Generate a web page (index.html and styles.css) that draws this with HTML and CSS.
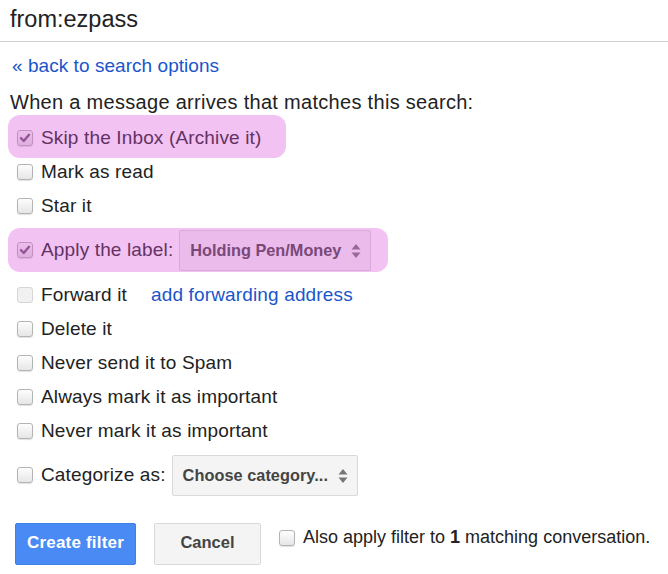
FILE: index.html
```html
<!DOCTYPE html>
<html>
<head>
<meta charset="utf-8">
<link rel="stylesheet" href="styles.css">
</head>
<body>
<div class="header">from:ezpass</div>
<div class="content">
  <div class="back"><a href="#">« back to search options</a></div>
  <div class="intro">When a message arrives that matches this search:</div>

  <div class="row">
    <span class="hl hl-skip"></span>
    <span class="cb checked"><svg viewBox="0 0 16 16" width="16" height="16"><path d="M4 8.2 L6.8 11 L12 4.8" fill="none" stroke="#6a5a72" stroke-width="2.4" stroke-linecap="round" stroke-linejoin="round"/></svg></span>
    <span class="label">Skip the Inbox (Archive it)</span>
  </div>
  <div class="row">
    <span class="cb"></span>
    <span class="label">Mark as read</span>
  </div>
  <div class="row">
    <span class="cb"></span>
    <span class="label">Star it</span>
  </div>
  <div class="row row-select row-apply">
    <span class="hl hl-apply"></span>
    <span class="cb checked"><svg viewBox="0 0 16 16" width="16" height="16"><path d="M4 8.2 L6.8 11 L12 4.8" fill="none" stroke="#6a5a72" stroke-width="2.4" stroke-linecap="round" stroke-linejoin="round"/></svg></span>
    <span class="label">Apply the label:</span>
    <span class="select sel-label">Holding Pen/Money<svg class="arrows" viewBox="0 0 10 16" width="10" height="16"><path d="M5 1 L9.5 6.5 L0.5 6.5 Z M5 15 L9.5 9.5 L0.5 9.5 Z" fill="#777"/></svg></span>
  </div>
  <div class="row">
    <span class="cb disabled"></span>
    <span class="label">Forward it</span>
    <a class="fwd" href="#">add forwarding address</a>
  </div>
  <div class="row">
    <span class="cb"></span>
    <span class="label">Delete it</span>
  </div>
  <div class="row">
    <span class="cb"></span>
    <span class="label">Never send it to Spam</span>
  </div>
  <div class="row">
    <span class="cb"></span>
    <span class="label">Always mark it as important</span>
  </div>
  <div class="row">
    <span class="cb"></span>
    <span class="label">Never mark it as important</span>
  </div>
  <div class="row row-select row-cat">
    <span class="cb"></span>
    <span class="label">Categorize as:</span>
    <span class="select sel-cat">Choose category...<svg class="arrows" viewBox="0 0 10 16" width="10" height="16"><path d="M5 1 L9.5 6.5 L0.5 6.5 Z M5 15 L9.5 9.5 L0.5 9.5 Z" fill="#777"/></svg></span>
  </div>

  <div class="actions">
    <button class="btn btn-primary">Create filter</button>
    <button class="btn btn-cancel">Cancel</button>
    <span class="also">
      <span class="cb"></span>
      <span class="label">Also apply filter to <b>1</b> matching conversation.</span>
    </span>
  </div>
</div>
</body>
</html>
```
FILE: styles.css
```css
html, body {
  margin: 0;
  padding: 0;
  background: #fff;
  font-family: "Liberation Sans", Arial, sans-serif;
  color: #222;
}
.header {
  height: 41px;
  border-bottom: 1px solid #cfcfcf;
  padding-left: 10px;
  font-size: 23.5px;
  line-height: 38px;
  color: #222;
}
.content {
  padding-left: 8px;
}
.back {
  margin-top: 13px;
  height: 22px;
  line-height: 22px;
  font-size: 19px;
  letter-spacing: 0.05px;
  padding-left: 4px;
}
a {
  color: #1a55cc;
  text-decoration: none;
}
.intro {
  margin-top: 14px;
  height: 22px;
  line-height: 22px;
  font-size: 20px;
  letter-spacing: 0.3px;
  padding-left: 2px;
  color: #222;
}
.row {
  position: relative;
  display: flex;
  align-items: center;
  height: 34px;
  padding-left: 9px;
  font-size: 19px;
  letter-spacing: 0.15px;
}
.intro + .row { margin-top: 8px; }
.label {
  position: relative;
  margin-left: 8px;
  white-space: nowrap;
}
.cb {
  position: relative;
  flex: none;
  display: inline-block;
  width: 14px;
  height: 14px;
  border: 1px solid #b4b4b4;
  border-radius: 3px;
  background: linear-gradient(#fdfdfd, #e6e6e6);
  box-shadow: 0 1px 1px rgba(0,0,0,0.12);
}
.cb svg {
  position: absolute;
  left: -1px;
  top: -1px;
}
.cb.checked {
  background: linear-gradient(#f7f7f7, #e2e2e2);
}
.cb.disabled {
  border-color: #d6d6d6;
  background: #f1f1f1;
  box-shadow: none;
}
.hl {
  position: absolute;
  background: rgba(218, 81, 218, 0.35);
  border-radius: 12px;
  z-index: 2;
  pointer-events: none;
}
.hl-skip {
  left: 0;
  top: -6px;
  width: 278px;
  height: 43px;
}
.row-apply {
  height: 44px;
  margin-top: 5px;
  margin-bottom: 6px;
}
.hl-apply {
  left: 0;
  top: 0;
  width: 380px;
  height: 44px;
}
.select {
  position: relative;
  display: inline-flex;
  align-items: center;
  box-sizing: border-box;
  height: 41px;
  margin-left: 6px;
  padding-left: 10px;
  border: 1px solid #d9d9d9;
  border-radius: 2px;
  background: #f4f4f4;
  font-size: 16.3px;
  letter-spacing: 0;
  font-weight: bold;
  color: #444;
  white-space: nowrap;
}
.select .arrows {
  position: absolute;
  right: 9px;
  top: 12px;
}
.sel-label { width: 192px; }
.sel-cat { width: 186px; letter-spacing: 0.05px; }
.fwd {
  margin-left: 24px;
  white-space: nowrap;
}
.row-cat {
  height: 42px;
  margin-top: 6px;
}
.actions {
  display: flex;
  align-items: center;
  margin-top: 27px;
  padding-left: 7px;
}
.btn {
  box-sizing: border-box;
  height: 42px;
  border-radius: 2px;
  font-family: "Liberation Sans", Arial, sans-serif;
  font-size: 16.5px;
  font-weight: bold;
  padding: 0 0 3px 0;
}
.btn-primary {
  width: 121px;
  background: #4a8af4;
  border: 1px solid #3f7fe8;
  color: #fff;
  font-size: 17px;
  letter-spacing: 0.2px;
}
.btn-cancel {
  width: 107px;
  margin-left: 18px;
  background: #f4f4f4;
  border: 1px solid #d9d9d9;
  color: #444;
}
.also {
  display: flex;
  align-items: center;
  margin-left: 18px;
  margin-top: -13px;
  font-size: 18px;
  letter-spacing: 0;
  color: #222;
}
```
